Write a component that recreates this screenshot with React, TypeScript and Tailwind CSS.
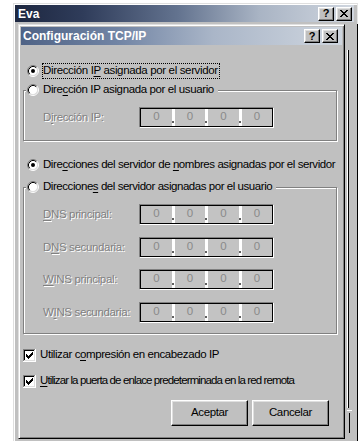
import React from "react";

const U = ({ c }: { c: string }) => (
  <span className="underline decoration-1 underline-offset-[2px]">{c}</span>
);

function Radio({ checked = false }: { checked?: boolean }) {
  return (
    <svg width="12" height="12" viewBox="0 0 12 12" className="block shrink-0">
      <circle cx="6" cy="6" r="4.5" fill="#ffffff" />
      <path d="M2.11 9.89 A5.5 5.5 0 0 1 9.89 2.11" stroke="#808080" fill="none" />
      <path d="M9.89 2.11 A5.5 5.5 0 0 1 2.11 9.89" stroke="#ffffff" fill="none" />
      <path d="M2.82 9.18 A4.5 4.5 0 0 1 9.18 2.82" stroke="#000000" fill="none" />
      <path d="M9.18 2.82 A4.5 4.5 0 0 1 2.82 9.18" stroke="#dfdfdf" fill="none" />
      {checked && <circle cx="6" cy="6" r="2" fill="#000000" />}
    </svg>
  );
}

function Check() {
  const cols = [2, 3, 4, 3, 2, 1, 0];
  return (
    <svg width="13" height="13" viewBox="0 0 13 13" className="block shrink-0" shapeRendering="crispEdges">
      <rect x="0" y="0" width="13" height="13" fill="#ffffff" />
      <rect x="0" y="0" width="12" height="1" fill="#808080" />
      <rect x="0" y="0" width="1" height="12" fill="#808080" />
      <rect x="12" y="0" width="1" height="13" fill="#ffffff" />
      <rect x="0" y="12" width="13" height="1" fill="#ffffff" />
      <rect x="1" y="1" width="10" height="1" fill="#000000" />
      <rect x="1" y="1" width="1" height="10" fill="#000000" />
      <rect x="11" y="1" width="1" height="11" fill="#dfdfdf" />
      <rect x="1" y="11" width="11" height="1" fill="#dfdfdf" />
      {cols.map((s, i) => (
        <rect key={i} x={3 + i} y={3 + s} width="1" height="3" fill="#000000" />
      ))}
    </svg>
  );
}

function CloseGlyph() {
  const rows: [number, number][][] = [
    [[0, 2], [6, 2]],
    [[1, 2], [5, 2]],
    [[2, 4]],
    [[3, 2]],
    [[2, 4]],
    [[1, 2], [5, 2]],
    [[0, 2], [6, 2]],
  ];
  return (
    <svg width="8" height="7" viewBox="0 0 8 7" className="block" shapeRendering="crispEdges">
      {rows.map((r, y) =>
        r.map(([x, w], k) => <rect key={`${y}-${k}`} x={x} y={y} width={w} height="1" fill="#000000" />)
      )}
    </svg>
  );
}

function TBtn({ kind }: { kind: "help" | "close" }) {
  return (
    <div className="flex h-[14px] w-[16px] items-center justify-center border border-t-white border-l-white border-r-black border-b-black bg-[#c0c0c0] shadow-[inset_-1px_-1px_0_#808080,inset_1px_1px_0_#dfdfdf]">
      {kind === "help" ? (
        <span className="text-[11px] font-bold leading-none tracking-normal text-black">?</span>
      ) : (
        <CloseGlyph />
      )}
    </div>
  );
}

function Btn({ children }: { children: React.ReactNode }) {
  return (
    <div className="flex h-[26px] w-[77px] items-center justify-center border border-t-white border-l-white border-r-black border-b-black bg-[#c0c0c0] text-black shadow-[inset_-1px_-1px_0_#808080,inset_1px_1px_0_#dfdfdf]">
      <span>{children}</span>
    </div>
  );
}

function IpField() {
  return (
    <div className="h-[21px] w-[135px] shrink-0 border border-t-[#808080] border-l-[#808080] border-r-white border-b-white">
      <div className="flex h-full w-full border border-black bg-[#c3c3c3]">
        {[0, 1, 2, 3].map((i) => (
          <React.Fragment key={i}>
            {i > 0 && (
              <div className="flex w-[3px] flex-col justify-end bg-white pb-[3px]">
                <div className="h-[2px] w-[2px] bg-[#606060]" />
              </div>
            )}
            <div className="flex flex-1 justify-center pt-[1px] leading-[13px] text-[#8a8a8a]">
              <span>0</span>
            </div>
          </React.Fragment>
        ))}
      </div>
    </div>
  );
}

const disabled = "text-[#808080] [text-shadow:1px_1px_0_#ffffff]";

function FieldRow({ label, mt }: { label: React.ReactNode; mt: string }) {
  return (
    <div className={`flex h-[21px] items-center ${mt}`}>
      <div className={`w-[96px] shrink-0 whitespace-nowrap pl-[19px] box-content ${disabled}`}>{label}</div>
      <IpField />
    </div>
  );
}

export default function App() {
  return (
    <div className="h-[441px] w-[364px] overflow-hidden bg-white font-['Liberation_Sans',Arial,sans-serif] text-[11.5px] tracking-[-0.35px] text-black">
      {/* outer window */}
      <div className="ml-[13px] mt-[3px] h-[460px] w-[345px] border-l border-t border-[#dfdfdf] border-r border-r-[#e6e6e6] bg-[#c0c0c0] p-[1px] shadow-[inset_1px_1px_0_#ffffff]">
        <div className="flex h-[17px] w-[339px] items-center bg-[linear-gradient(to_right,#1d2740,#2f3c5a_20%,#63738f_48%,#a9b4c4_72%,#d0d6df)] pr-[2px]">
          <span className="pl-[3px] text-[12px] font-bold tracking-normal text-white">Eva</span>
          <div className="ml-auto flex gap-[2px]">
            <TBtn kind="help" />
            <TBtn kind="close" />
          </div>
        </div>

        <div className="mt-[2px] flex">
          {/* inner dialog */}
          <div className="ml-[3px] h-[415px] w-[327px] shrink-0 border border-t-[#dfdfdf] border-l-[#dfdfdf] border-r-black border-b-black p-[2px] shadow-[inset_1px_1px_0_#ffffff,inset_-1px_-1px_0_#808080]">
            <div className="flex h-[18px] items-center bg-[linear-gradient(to_right,#4f6386,#7184a4_30%,#aab6c8_60%,#cfd6df)] pr-[4px]">
              <span className="pl-[2px] text-[12px] font-bold tracking-normal text-white">
                Configuración TCP/IP
              </span>
              <div className="ml-auto flex gap-[2px]">
                <TBtn kind="help" />
                <TBtn kind="close" />
              </div>
            </div>

            {/* client */}
            <div className="flex flex-col whitespace-nowrap">
              <div className="mt-[18px] flex h-[16px] items-center">
                <div className="ml-[6px]">
                  <Radio checked />
                </div>
                <div className="ml-[3px] flex h-[16px] items-center border border-dotted border-black pr-[1px]">
                  <span className="tracking-[-0.35px]">
                    Dirección I<U c="P" /> asignada por el servidor
                  </span>
                </div>
              </div>

              {/* group 1 */}
              <div className="ml-[2px] mt-[11px] flex w-[314px] flex-col border border-[#808080] pb-[12px] shadow-[inset_1px_1px_0_#ffffff,1px_1px_0_#ffffff]">
                <div className="-mt-[9px] ml-[2px] flex h-[16px] items-center self-start bg-[#c0c0c0] pl-[1px] pr-[4px]">
                  <Radio />
                  <span className="ml-[4px] tracking-[-0.38px]">
                    Dire<U c="c" />ción IP asignada por el usuario
                  </span>
                </div>
                <FieldRow
                  mt="mt-[9px]"
                  label={
                    <>
                      D<U c="i" />rección IP:
                    </>
                  }
                />
              </div>

              <div className="mt-[16px] flex h-[16px] items-center">
                <div className="ml-[6px]">
                  <Radio checked />
                </div>
                <span className="ml-[4px] tracking-[-0.43px]">
                  Dire<U c="c" />ciones del servidor de <U c="n" />ombres asignadas por el servidor
                </span>
              </div>

              {/* group 2 */}
              <div className="ml-[2px] mt-[14px] flex w-[314px] flex-col border border-[#808080] pb-[10px] shadow-[inset_1px_1px_0_#ffffff,1px_1px_0_#ffffff]">
                <div className="-mt-[9px] ml-[2px] flex h-[16px] items-center self-start bg-[#c0c0c0] pl-[1px] pr-[4px]">
                  <Radio />
                  <span className="ml-[4px] tracking-[-0.45px]">
                    Direccione<U c="s" /> del servidor asignadas por el usuario
                  </span>
                </div>
                <FieldRow
                  mt="mt-[9px]"
                  label={
                    <>
                      <U c="D" />NS principal:
                    </>
                  }
                />
                <FieldRow
                  mt="mt-[12px]"
                  label={
                    <>
                      D<U c="N" />S secundaria:
                    </>
                  }
                />
                <FieldRow
                  mt="mt-[11px]"
                  label={
                    <>
                      <U c="W" />INS principal:
                    </>
                  }
                />
                <FieldRow
                  mt="mt-[12px]"
                  label={
                    <>
                      W<U c="I" />NS secundaria:
                    </>
                  }
                />
              </div>

              <div className="mt-[13px] flex h-[16px] items-center">
                <div className="ml-[2px]">
                  <Check />
                </div>
                <span className="ml-[4px] tracking-[-0.41px]">
                  Utilizar c<U c="o" />mpresión en encabezado IP
                </span>
              </div>
              <div className="mt-[10px] flex h-[16px] items-center">
                <div className="ml-[2px]">
                  <Check />
                </div>
                <span className="ml-[4px] tracking-[-0.88px]">
                  <U c="U" />tilizar la puerta de enlace predeterminada en la red remota
                </span>
              </div>

              <div className="mt-[11px] flex justify-end gap-[4px] pr-[13px]">
                <Btn>Aceptar</Btn>
                <Btn>Cancelar</Btn>
              </div>
            </div>
          </div>

          {/* strip right of the dialog: edges of the window behind */}
          <div className="flex">
            <div className="ml-[2px] mt-[26px] flex flex-col">
              <div className="h-[358px] w-[2px] border-r border-black shadow-[inset_1px_0_0_#ffffff]" />
              <div className="mt-[2px] h-[1px] w-[5px] bg-white" />
              <div className="ml-[1px] mt-[2px] h-[20px] w-[2px] border-r border-black" />
            </div>
            <div className="ml-[5px] h-[420px] w-[1px] bg-black" />
          </div>
        </div>
      </div>
    </div>
  );
}
